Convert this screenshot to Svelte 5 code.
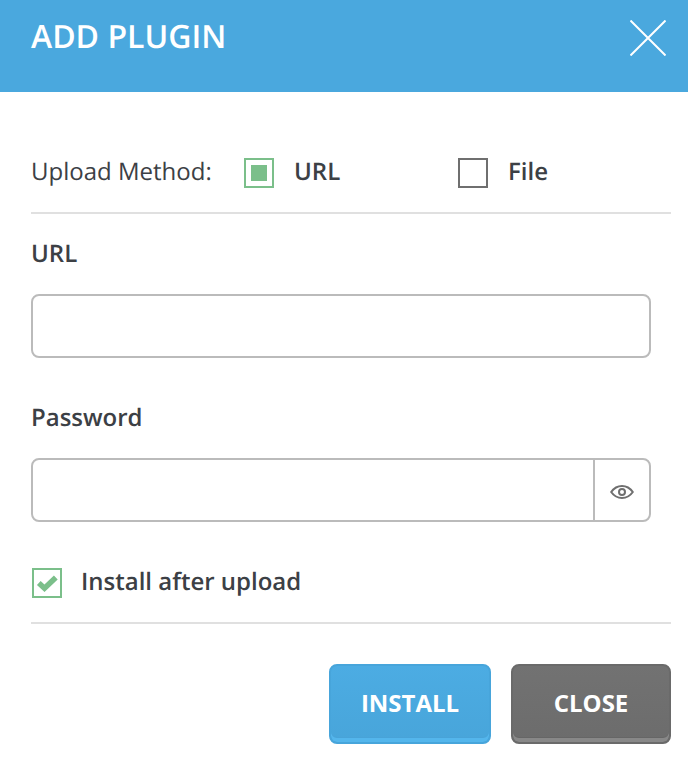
<script>
  let password = $state('');
  let url = $state('');
</script>

<div class="modal">
  <header class="head">
    <h1>ADD PLUGIN</h1>
    <button class="x" aria-label="Close">
      <svg width="36" height="36" viewBox="0 0 36 36"><path d="M0.5 0.5 35.5 35.5M35.5 0.5 0.5 35.5" stroke="#fff" stroke-width="2" fill="none" /></svg>
    </button>
  </header>
  <main class="body">
    <div class="method">
      <span class="method-label">Upload Method:</span>
      <span class="opt url"><span class="box green"><span class="dot"></span></span><b>URL</b></span>
      <span class="opt"><span class="box grey"></span><b>File</b></span>
    </div>
    <hr />
    <label class="lbl first" for="u">URL</label>
    <div class="field"><input id="u" bind:value={url} /></div>
    <label class="lbl second" for="p">Password</label>
    <div class="field">
      <input id="p" type="password" bind:value={password} />
      <span class="eye">
        <svg width="24" height="16" viewBox="0 0 24 16" fill="none" stroke="#6f6f6f" stroke-width="2"><path d="M1.2 8C4 4 7.600 2 12 2s8 2 10.800 6C20 12 16.400 14 12 14S4 12 1.200 8Z" /><circle cx="12" cy="8" r="3" /></svg>
      </span>
    </div>
    <div class="after">
      <span class="box green">
        <svg width="22" height="18" viewBox="0 0 22 18"><path d="M2.800 9 8.500 14.200 19.800 3.500" fill="none" stroke="#7bbf8a" stroke-width="5.500" /></svg>
      </span>
      <b>Install after upload</b>
    </div>
    <hr class="low" />
    <div class="actions">
      <button class="btn blue">INSTALL</button>
      <button class="btn gray">CLOSE</button>
    </div>
  </main>
</div>

<style>
  :global(body) {
    margin: 0;
    background: #fff;
    font-family: "Open Sans", sans-serif;
    color: #3c4045;
    text-rendering: geometricPrecision;
  }
  .modal {
    width: 688px;
    height: 764px;
    overflow: hidden;
  }
  .head {
    height: 92px;
    background: #4aa8de;
    display: flex;
    align-items: center;
    justify-content: space-between;
    padding: 0 22px 18px 31px;
    box-sizing: border-box;
  }
  h1 {
    margin: 0;
    font-size: 32px;
    font-weight: 600;
    color: #fff;
    line-height: 1;
  }
  .x {
    background: none;
    border: 0;
    padding: 0;
    display: flex;
    margin-top: 1px;
  }
  .body {
    padding: 66px 17px 0 31px;
  }
  .method {
    display: flex;
    align-items: center;
    height: 30px;
    font-size: 24px;
    line-height: 26px;
  }
  .method-label {
    width: 213px;
    padding-bottom: 2px;
  }
  .opt {
    display: flex;
    align-items: center;
    gap: 20px;
  }
  .opt.url {
    width: 214px;
  }
  b {
    font-weight: 600;
    padding-bottom: 2px;
  }
  .box {
    width: 30px;
    height: 30px;
    box-sizing: border-box;
    border: 2px solid;
    display: flex;
    align-items: center;
    justify-content: center;
    flex: none;
  }
  .green {
    border-color: #7bbf8a;
  }
  .grey {
    border-color: #6f6f6f;
  }
  .dot {
    width: 16px;
    height: 16px;
    background: #7bbf8a;
  }
  hr {
    border: 0;
    height: 2px;
    background: #e0e0e0;
    margin: 24px 0 0;
  }
  .lbl {
    display: block;
    font-size: 24px;
    font-weight: 600;
    line-height: 32px;
  }
  .first {
    margin-top: 24px;
    margin-bottom: 24px;
  }
  .second {
    margin-top: 44px;
    margin-bottom: 24px;
  }
  .field {
    width: 620px;
    height: 64px;
    box-sizing: border-box;
    border: 2px solid #bbb;
    border-radius: 8px;
    display: flex;
  }
  input {
    flex: 1;
    min-width: 0;
    border: 0;
    outline: 0;
    background: none;
    font: inherit;
  }
  .eye {
    width: 54px;
    border-left: 2px solid #bbb;
    display: flex;
    align-items: center;
    justify-content: center;
    padding-top: 3px;
  }
  .after {
    display: flex;
    align-items: center;
    gap: 19px;
    font-size: 24px;
    line-height: 26px;
    margin-top: 46px;
    padding-left: 1px;
  }
  .low {
    margin-top: 24px;
  }
  .actions {
    display: flex;
    justify-content: flex-end;
    gap: 20px;
    margin-top: 40px;
  }
  .btn {
    height: 80px;
    border: 2px solid;
    border-radius: 8px;
    color: #fff;
    font: 700 24px "Open Sans", sans-serif;
    padding: 0 0 4px;
  }
  .blue {
    width: 162px;
    background: linear-gradient(#4cace3, #48a5da);
    border-color: #47a5db;
    box-shadow: inset 0 -4px 0 #54b6ec, inset 0 -5px 0 #48a3d8;
  }
  .gray {
    width: 160px;
    background: linear-gradient(#727272, #6c6c6c);
    border-color: #6a6a6a;
    box-shadow: inset 0 -4px 0 #888, inset 0 -5px 0 #666;
  }
</style>
